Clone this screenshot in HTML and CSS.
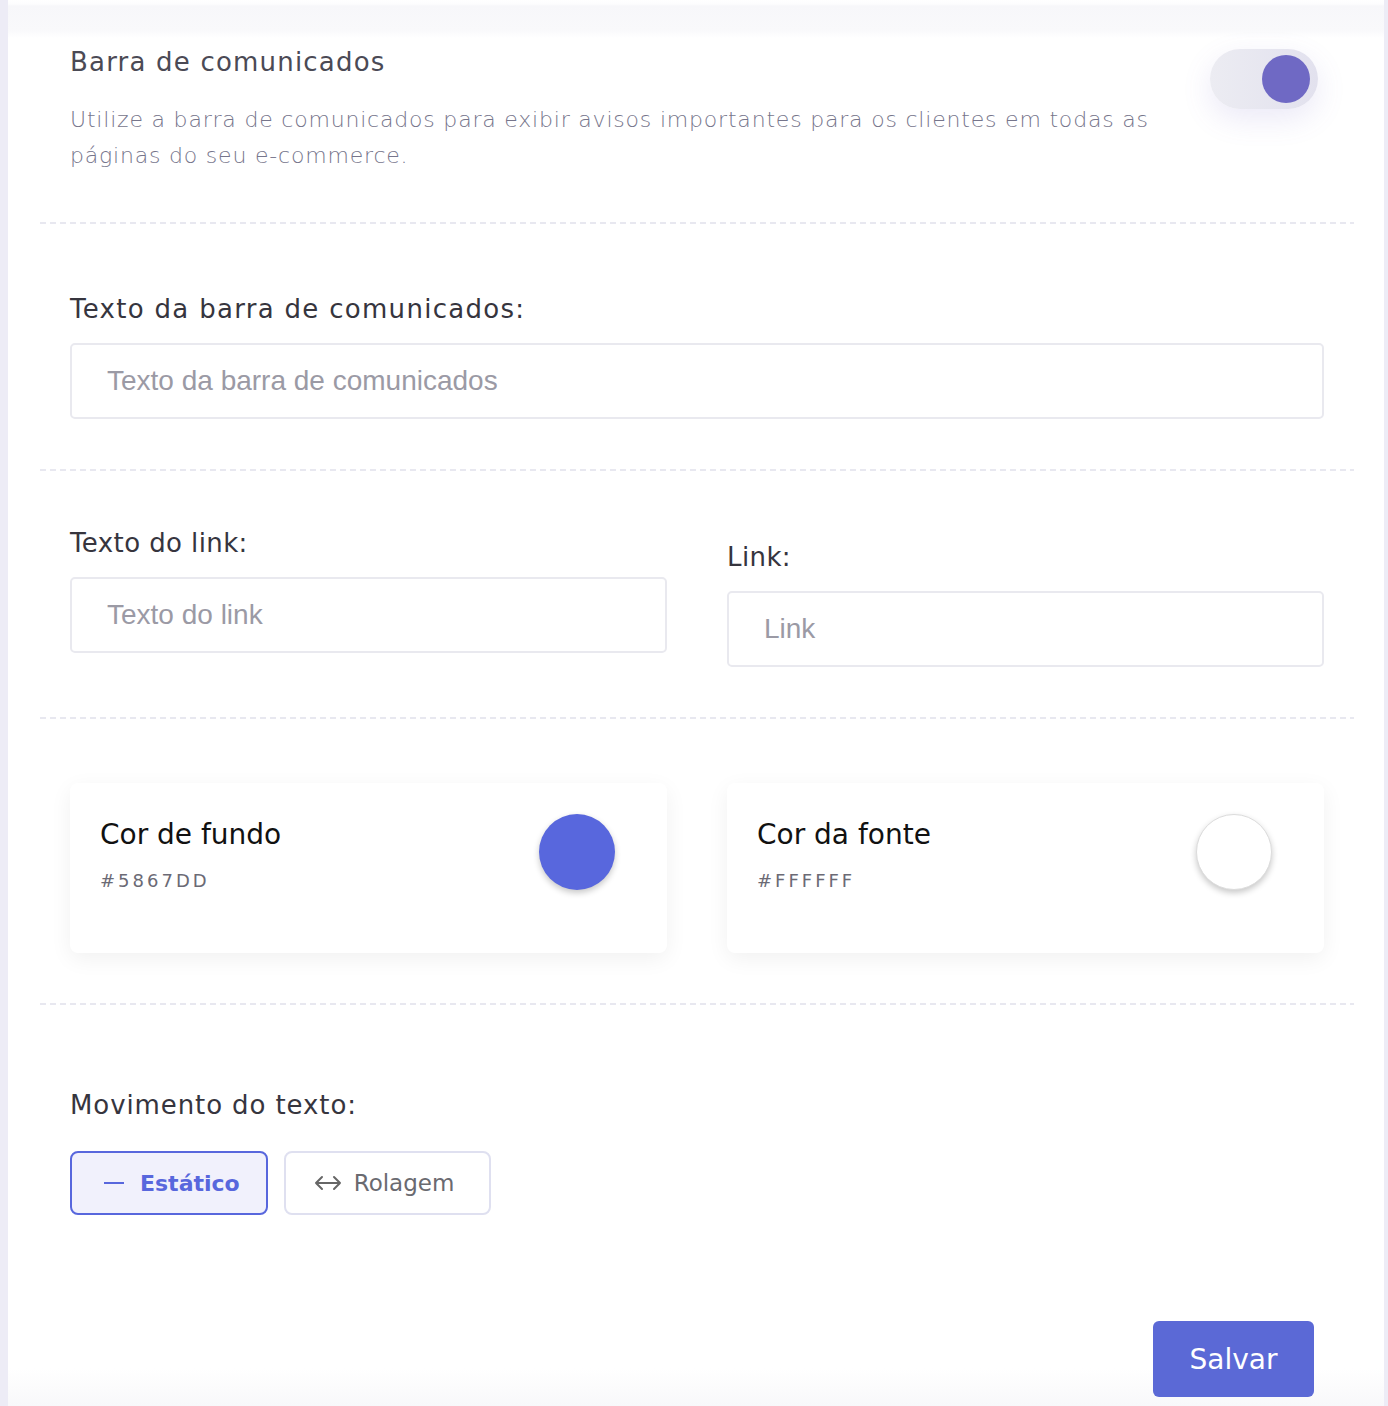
FILE: index.html
```html
<!DOCTYPE html>
<html lang="pt-BR">
<head>
    <meta charset="UTF-8">
    <meta name="viewport" content="width=device-width, initial-scale=1.0">
    <title>Barra de comunicados</title>
    <link rel="stylesheet" href="styles.css">
</head>
<body>
    <div class="panel">
        <div class="section intro">
            <div class="intro-text">
                <h2 class="intro-title">Barra de comunicados</h2>
                <p class="intro-desc">Utilize a barra de comunicados para exibir avisos importantes para os clientes em todas as páginas do seu e-commerce.</p>
            </div>
            <div class="toggle on"><span class="knob"></span></div>
        </div>
        <div class="divider"></div>

        <div class="section single">
            <label class="field-label wide">Texto da barra de comunicados:</label>
            <input class="text-input" type="text" placeholder="Texto da barra de comunicados">
        </div>
        <div class="divider"></div>

        <div class="section cols">
            <div class="col">
                <label class="field-label tight">Texto do link:</label>
                <input class="text-input" type="text" placeholder="Texto do link">
            </div>
            <div class="col col-offset">
                <label class="field-label tight">Link:</label>
                <input class="text-input" type="text" placeholder="Link">
            </div>
        </div>
        <div class="divider"></div>

        <div class="section cols cards">
            <div class="color-card">
                <div>
                    <div class="color-name">Cor de fundo</div>
                    <div class="color-hex">#5867DD</div>
                </div>
                <span class="swatch swatch-blue"></span>
            </div>
            <div class="color-card">
                <div>
                    <div class="color-name">Cor da fonte</div>
                    <div class="color-hex">#FFFFFF</div>
                </div>
                <span class="swatch swatch-white"></span>
            </div>
        </div>
        <div class="divider"></div>

        <div class="section motion">
            <label class="field-label">Movimento do texto:</label>
            <div class="options">
                <button class="opt active">
                    <svg width="20" height="4" viewBox="0 0 20 4"><line x1="0" y1="2" x2="20" y2="2" stroke="#5867dd" stroke-width="2"/></svg>
                    Estático
                </button>
                <button class="opt">
                    <svg width="28" height="16" viewBox="0 0 28 16" fill="none" stroke="#666" stroke-width="2" stroke-linecap="round" stroke-linejoin="round"><path d="M2 8h24M8 2L2 8l6 6M20 2l6 6-6 6"/></svg>
                    Rolagem
                </button>
            </div>
        </div>

        <div class="actions">
            <button class="save">Salvar</button>
        </div>
    </div>
</body>
</html>
```

FILE: styles.css
```css
html, body {
    margin: 0;
    padding: 0;
}
body {
    background-color: #edecf6;
    font-family: "DejaVu Sans", "Open Sans", sans-serif;
    height: 1406px;
    overflow: hidden;
}
.panel {
    margin: 0 4px 0 8px;
    padding: 0 30px 0 32px;
    height: 1406px;
    box-sizing: border-box;
    background: linear-gradient(to bottom, #ffffff 0px, #fdfdfe 4px, #f7f7fa 6px, #f9f9fb 30px, #ffffff 38px, #ffffff 1368px, #f8f8fa 1406px);
}
.section {
    padding: 0 30px;
}
.divider {
    height: 2px;
    background-image: repeating-linear-gradient(to right, #e8e8f0 0, #e8e8f0 6px, transparent 6px, transparent 10px);
}

/* topo */
.intro {
    display: flex;
    justify-content: space-between;
    padding-top: 44px;
    padding-bottom: 48px;
}
.intro-text {
    max-width: 1100px;
}
.intro-title {
    margin: 0;
    font-size: 26px;
    font-weight: 400;
    line-height: 36px;
    letter-spacing: 1.2px;
    color: #4b4a55;
}
.intro-desc {
    margin: 22px 0 0;
    font-size: 22px;
    font-weight: 300;
    line-height: 36px;
    letter-spacing: 0.8px;
    color: #76758b;
}
.toggle {
    width: 108px;
    height: 60px;
    margin: 5px 6px 0 0;
    border-radius: 30px;
    background: linear-gradient(to right, #ececf2, #e2e1ee);
    box-shadow: 0 10px 30px rgba(110, 100, 200, 0.14);
    position: relative;
    flex-shrink: 0;
}
.toggle .knob {
    position: absolute;
    top: 6px;
    right: 8px;
    width: 48px;
    height: 48px;
    border-radius: 50%;
    background-color: #6f69c4;
}

/* campos */
.field-label {
    display: block;
    padding-top: 2px;
    font-size: 26px;
    line-height: 36px;
    letter-spacing: 0.9px;
    color: #36353e;
}
.field-label.wide {
    letter-spacing: 1.3px;
}
.field-label.tight {
    letter-spacing: 0.4px;
}
.text-input {
    display: block;
    width: 100%;
    box-sizing: border-box;
    height: 76px;
    margin-top: 16px;
    padding: 0 35px;
    border: 2px solid #e9e9ef;
    border-radius: 5px;
    font-family: "Liberation Sans", Arial, sans-serif;
    font-size: 28px;
    color: #333;
    background: #fff;
}
.text-input::placeholder {
    color: #9b9aa5;
}
.single {
    padding-top: 65px;
    padding-bottom: 50px;
}
.cols {
    display: grid;
    grid-template-columns: 1fr 1fr;
    column-gap: 60px;
    padding-top: 52px;
    padding-bottom: 50px;
}
.col-offset {
    padding-top: 14px;
}

/* cores */
.cards {
    padding-top: 64px;
}
.color-card {
    height: 170px;
    box-sizing: border-box;
    padding: 34px 52px 0 30px;
    border-radius: 8px;
    background: #fff;
    box-shadow: 0 6px 22px rgba(0, 0, 0, 0.06);
    display: flex;
    justify-content: space-between;
    align-items: flex-start;
}
.color-name {
    font-size: 28px;
    line-height: 36px;
    color: #111;
}
.color-hex {
    margin-top: 16px;
    font-size: 18px;
    line-height: 24px;
    letter-spacing: 3px;
    color: #6b6a75;
}
.swatch {
    width: 76px;
    height: 76px;
    margin-top: -3px;
    border-radius: 50%;
    box-shadow: 0 3px 6px rgba(0, 0, 0, 0.22);
}
.swatch-blue {
    background-color: #5867dd;
}
.swatch-white {
    background-color: #fff;
    border: 1px solid #dcdcdc;
    box-sizing: border-box;
}

/* movimento */
.motion {
    padding-top: 80px;
}
.options {
    display: flex;
    gap: 16px;
    margin-top: 28px;
}
.opt {
    display: flex;
    align-items: center;
    gap: 12px;
    height: 64px;
    padding: 0 35px 0 28px;
    border: 2px solid #dfe0f0;
    border-radius: 8px;
    background: #fff;
    font-family: "DejaVu Sans", "Open Sans", sans-serif;
    font-size: 23px;
    color: #6a6a70;
    cursor: pointer;
}
.opt.active {
    padding: 0 26px 0 32px;
    border-color: #5867dd;
    background-color: #f1f1fc;
    color: #5867dd;
    font-size: 22px;
    font-weight: 700;
    gap: 16px;
}

.actions {
    display: flex;
    justify-content: flex-end;
    padding: 106px 40px 0 0;
}
.save {
    width: 161px;
    height: 76px;
    border: none;
    border-radius: 6px;
    background-color: #5b69d6;
    color: #fff;
    font-family: "DejaVu Sans", "Open Sans", sans-serif;
    font-size: 28px;
    cursor: pointer;
}
```
